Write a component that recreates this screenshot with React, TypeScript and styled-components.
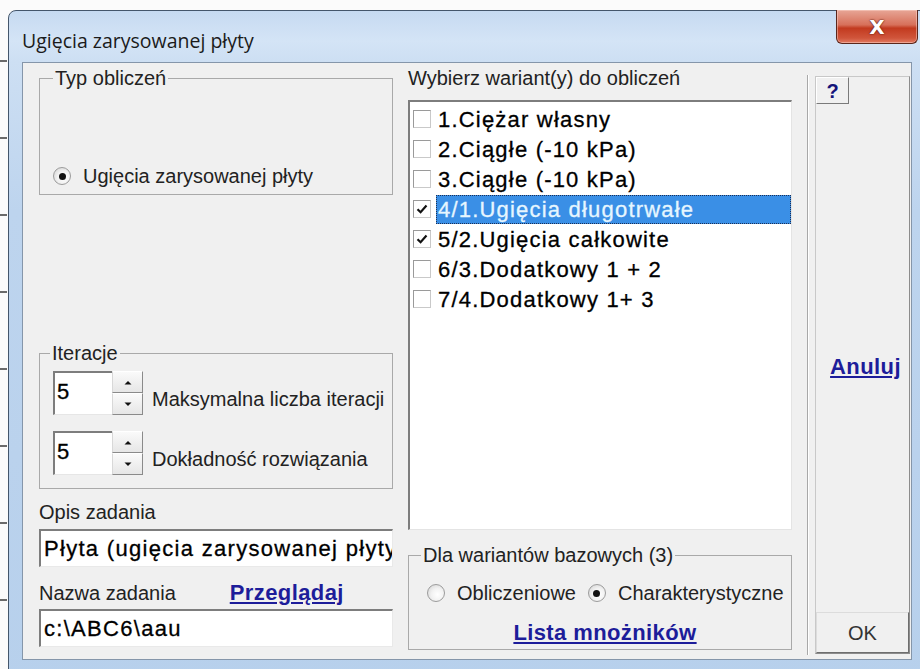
import React from 'react';
import styled, { createGlobalStyle } from 'styled-components';

const Global = createGlobalStyle`
  html, body { margin: 0; padding: 0; width: 920px; height: 669px; overflow: hidden; background: #fbfbfb; }
  body { font-family: "Liberation Sans", Arial, sans-serif; }
  * { box-sizing: border-box; }
`;

const Desktop = styled.div`
  width: 920px;
  height: 669px;
  overflow: hidden;
  padding: 10px 0 0 8px;
  background:
    repeating-linear-gradient(to bottom, transparent 0 60px, #6a6a6a 60px 62px, transparent 62px 77px) left top / 7px 100% no-repeat,
    #fbfbfb;
`;

const Window = styled.div`
  width: 920px;
  height: 690px;
  border: 1px solid #44566b;
  border-radius: 8px 8px 0 0;
  background: linear-gradient(to bottom, #c6daf1 0px, #d4e4f6 30px, #cddff3 50px, #bdd4ee 200px, #b7d0ec 100%);
  display: flex;
  flex-direction: column;
  padding: 0 15px 0 13px;
`;

const TitleBar = styled.div`
  height: 51px;
  flex: none;
  display: flex;
  align-items: flex-start;
  justify-content: space-between;
`;

const Title = styled.div`
  margin-top: 17px;
  font: 19.5px/26px "Open Sans", "Noto Sans", sans-serif;
  color: #1b1b1b;
`;

const CloseButton = styled.div`
  margin-top: -1px;
  margin-right: -6px;
  width: 82px;
  height: 34px;
  border: 1px solid #5b261b;
  border-top: none;
  border-radius: 0 0 6px 6px;
  background: linear-gradient(to bottom, #e7a696 0%, #d7705a 45%, #c23a1f 55%, #d0553b 85%, #e27a62 100%);
  box-shadow: inset 0 0 0 1px rgba(255, 220, 210, 0.45);
  display: flex;
  align-items: center;
  justify-content: center;
  font: bold 20px/1 "DejaVu Sans", sans-serif;
  color: #fff;
  text-shadow: 0 0 2px #5b1a0e, 0 0 1px #5b1a0e;
`;

const Client = styled.div`
  flex: none;
  height: 598px;
  border: 1px solid #8596aa;
  background: #f0f0f0;
  display: grid;
  grid-template-columns: 354px 384px 103px;
  column-gap: 15px;
  padding: 4px 0 0 16px;
`;

const Column = styled.div`
  display: flex;
  flex-direction: column;
  min-width: 0;
`;

const Group = styled.fieldset<{ $pt: number; $pb: number; $pl: number; $mt?: number }>`
  margin: ${p => p.$mt ?? 0}px 0 0 0;
  min-width: 0;
  border: 1px solid #a9a9a9;
  padding: ${p => p.$pt}px 8px ${p => p.$pb}px ${p => p.$pl}px;
  font: 20px/22px "Liberation Sans", Arial, sans-serif;
  color: #222;
`;

const Legend = styled.legend<{ $ml: number }>`
  margin-left: ${p => p.$ml}px;
  padding: 0 2px;
  font: 20px/22px "Liberation Sans", Arial, sans-serif;
  color: #222;
`;

const Label = styled.div<{ $mt?: number }>`
  margin-top: ${p => p.$mt ?? 0}px;
  font: 20px/22px "Liberation Sans", Arial, sans-serif;
  color: #222;
  white-space: nowrap;
`;

const RadioRow = styled.div`
  display: flex;
  align-items: center;
  height: 22px;
  gap: 12px;
  white-space: nowrap;
`;

const RadioCircle = styled.span<{ $checked?: boolean }>`
  flex: none;
  width: 18px;
  height: 18px;
  border-radius: 50%;
  border: 1px solid #9c9c9c;
  background: radial-gradient(circle at 60% 60%, #ffffff 0%, #f2f2f2 45%, #cfcfcf 100%);
  display: flex;
  align-items: center;
  justify-content: center;
  &::after {
    content: "";
    width: 7px;
    height: 7px;
    border-radius: 50%;
    background: ${p => (p.$checked ? '#111' : 'transparent')};
  }
`;

const SpinRow = styled.div<{ $mt?: number }>`
  display: flex;
  align-items: flex-end;
  height: 44px;
  margin-top: ${p => p.$mt ?? 0}px;
  gap: 9px;
`;

const Spin = styled.div`
  display: flex;
  height: 44px;
  flex: none;
`;

const SpinValue = styled.div`
  width: 59px;
  height: 44px;
  background: #fff;
  border-style: solid;
  border-width: 2px 0 1px 2px;
  border-color: #7d7d7d #e6e6e6 #e6e6e6 #7d7d7d;
  padding: 6px 0 0 2px;
  font: 22px/26px "Liberation Sans", Arial, sans-serif;
  letter-spacing: 1px;
  -webkit-text-stroke: 0.3px #000;
  color: #000;
`;

const SpinButtons = styled.div`
  width: 31px;
  display: flex;
  flex-direction: column;
`;

const SpinButton = styled.div`
  flex: 1;
  background: linear-gradient(to bottom, #fafafa, #e6e6e6);
  border: 1px solid;
  border-color: #ffffff #8a8a8a #8a8a8a #d8d8d8;
  display: flex;
  align-items: center;
  justify-content: center;
`;

const SpinLabel = styled.div`
  margin-bottom: 5px;
  font: 20px/22px "Liberation Sans", Arial, sans-serif;
  color: #222;
  white-space: nowrap;
`;

const TextField = styled.div<{ $mt?: number }>`
  margin-top: ${p => p.$mt ?? 0}px;
  height: 38px;
  background: #fff;
  border-style: solid;
  border-width: 2px 1px 1px 2px;
  border-color: #7d7d7d #e9e9e9 #e9e9e9 #7d7d7d;
  padding: 4px 0 0 3px;
  overflow: hidden;
  white-space: nowrap;
  font: 22px/28px "Liberation Sans", Arial, sans-serif;
  letter-spacing: 1.3px;
  -webkit-text-stroke: 0.3px #000;
  color: #000;
`;

const NameRow = styled.div`
  margin-top: 13px;
  height: 26px;
  display: flex;
  align-items: center;
  gap: 54px;
`;

const Link = styled.span`
  font: bold 22px/26px "Liberation Sans", Arial, sans-serif;
  letter-spacing: 0.4px;
  color: #1d1d9a;
  text-decoration: underline;
  text-underline-offset: 2px;
  white-space: nowrap;
`;

const List = styled.div`
  margin-top: 11px;
  height: 430px;
  background: #fff;
  border-style: solid;
  border-width: 2px 1px 1px 2px;
  border-color: #7d7d7d #e4e4e4 #e4e4e4 #7d7d7d;
  padding: 2px 0 0 3px;
`;

const Item = styled.div`
  height: 30px;
  display: flex;
  align-items: center;
  gap: 5px;
`;

const Check = styled.span`
  flex: none;
  width: 18px;
  height: 18px;
  background: #fff;
  border: 1px solid;
  border-color: #9a9a9a #c9c9c9 #c9c9c9 #9a9a9a;
  display: flex;
  align-items: center;
  justify-content: center;
`;

const ItemText = styled.span<{ $selected?: boolean }>`
  flex: 1;
  height: 29px;
  padding-left: 2px;
  font: 22px/29px "Liberation Sans", Arial, sans-serif;
  letter-spacing: 1.2px;
  white-space: nowrap;
  color: ${p => (p.$selected ? '#e6f6ff' : '#000')};
  -webkit-text-stroke: 0.3px ${p => (p.$selected ? '#e6f6ff' : '#000')};
  background: ${p => (p.$selected ? '#3a8fe6' : 'transparent')};
  outline: ${p => (p.$selected ? '1px dotted #1c2f55' : 'none')};
  outline-offset: -1px;
`;

const LinkRow = styled.div`
  margin-top: 16px;
  display: flex;
  justify-content: center;
`;

const RightColumn = styled.div`
  margin: 8px 0 4px 0;
  border-left: 1px solid #a8a8a8;
  box-shadow: inset 1px 0 0 #ffffff;
  padding: 1px 0 1px 7px;
  display: flex;
`;

const ButtonPanel = styled.div`
  flex: 1;
  border: 1px solid;
  border-color: #c8c8c8 #8c8c8c #8c8c8c #c8c8c8;
  display: flex;
  flex-direction: column;
`;

const HelpButton = styled.div`
  width: 33px;
  height: 27px;
  border: 1px solid;
  border-color: #ffffff #7a7a7a #7a7a7a #ffffff;
  background: #f0f0f0;
  display: flex;
  align-items: center;
  justify-content: center;
  font: bold 20px/1 "Liberation Sans", Arial, sans-serif;
  color: #14147a;
`;

const PanelMiddle = styled.div`
  flex: 1;
  display: flex;
  align-items: center;
  justify-content: center;
  padding: 18px 0 0 6px;
`;

const OkButton = styled.div`
  height: 41px;
  border: 1px solid;
  border-color: #dcdcdc #6e6e6e #6e6e6e #dcdcdc;
  background: #f0f0f0;
  display: flex;
  align-items: center;
  justify-content: center;
  font: 20px/1 "Liberation Sans", Arial, sans-serif;
  color: #333;
`;

const CheckMark = () => (
  <svg width="14" height="14" viewBox="0 0 14 14">
    <path d="M2.5 7.2 L5.6 10.2 L11.5 3.6" fill="none" stroke="#111" strokeWidth="2.2" />
  </svg>
);

const Arrow = ({ up }: { up?: boolean }) => (
  <svg width="8" height="5" viewBox="0 0 8 5">
    <path d={up ? 'M0.5 4.5 L4 1 L7.5 4.5 Z' : 'M0.5 0.5 L4 4 L7.5 0.5 Z'} fill="#111" />
  </svg>
);

const variants = [
  { text: '1.Ciężar własny', checked: false, selected: false },
  { text: '2.Ciągłe (-10 kPa)', checked: false, selected: false },
  { text: '3.Ciągłe (-10 kPa)', checked: false, selected: false },
  { text: '4/1.Ugięcia długotrwałe', checked: true, selected: true },
  { text: '5/2.Ugięcia całkowite', checked: true, selected: false },
  { text: '6/3.Dodatkowy 1 + 2', checked: false, selected: false },
  { text: '7/4.Dodatkowy 1+ 3', checked: false, selected: false },
];

const SpinBox = ({ value, label, mt }: { value: string; label: string; mt?: number }) => (
  <SpinRow $mt={mt}>
    <Spin>
      <SpinValue>{value}</SpinValue>
      <SpinButtons>
        <SpinButton><Arrow up /></SpinButton>
        <SpinButton><Arrow /></SpinButton>
      </SpinButtons>
    </Spin>
    <SpinLabel>{label}</SpinLabel>
  </SpinRow>
);

export default function App() {
  return (
    <>
      <Global />
      <Desktop>
        <Window>
          <TitleBar>
            <Title>Ugięcia zarysowanej płyty</Title>
            <CloseButton>X</CloseButton>
          </TitleBar>
          <Client>
            <Column>
              <Group $pt={76} $pb={7} $pl={13}>
                <Legend $ml={0}>Typ obliczeń</Legend>
                <RadioRow>
                  <RadioCircle $checked />
                  <span>Ugięcia zarysowanej płyty</span>
                </RadioRow>
              </Group>
              <Group $mt={147} $pt={7} $pb={13} $pl={13}>
                <Legend $ml={-3}>Iteracje</Legend>
                <SpinBox value="5" label="Maksymalna liczba iteracji" />
                <SpinBox value="5" label="Dokładność rozwiązania" mt={16} />
              </Group>
              <Label $mt={12}>Opis zadania</Label>
              <TextField $mt={6}>Płyta (ugięcia zarysowanej płyty)</TextField>
              <NameRow>
                <Label>Nazwa zadania</Label>
                <Link>Przeglądaj</Link>
              </NameRow>
              <TextField $mt={3}>c:\ABC6\aau</TextField>
            </Column>

            <Column>
              <Label>Wybierz wariant(y) do obliczeń</Label>
              <List>
                {variants.map(v => (
                  <Item key={v.text}>
                    <Check>{v.checked && <CheckMark />}</Check>
                    <ItemText $selected={v.selected}>{v.text}</ItemText>
                  </Item>
                ))}
              </List>
              <Group $mt={14} $pt={16} $pb={3} $pl={18}>
                <Legend $ml={-6}>Dla wariantów bazowych (3)</Legend>
                <RadioRow>
                  <RadioCircle />
                  <span>Obliczeniowe</span>
                  <RadioCircle $checked />
                  <span>Charakterystyczne</span>
                </RadioRow>
                <LinkRow>
                  <Link>Lista mnożników</Link>
                </LinkRow>
              </Group>
            </Column>

            <RightColumn>
              <ButtonPanel>
                <HelpButton>?</HelpButton>
                <PanelMiddle>
                  <Link>Anuluj</Link>
                </PanelMiddle>
                <OkButton>OK</OkButton>
              </ButtonPanel>
            </RightColumn>
          </Client>
        </Window>
      </Desktop>
    </>
  );
}
